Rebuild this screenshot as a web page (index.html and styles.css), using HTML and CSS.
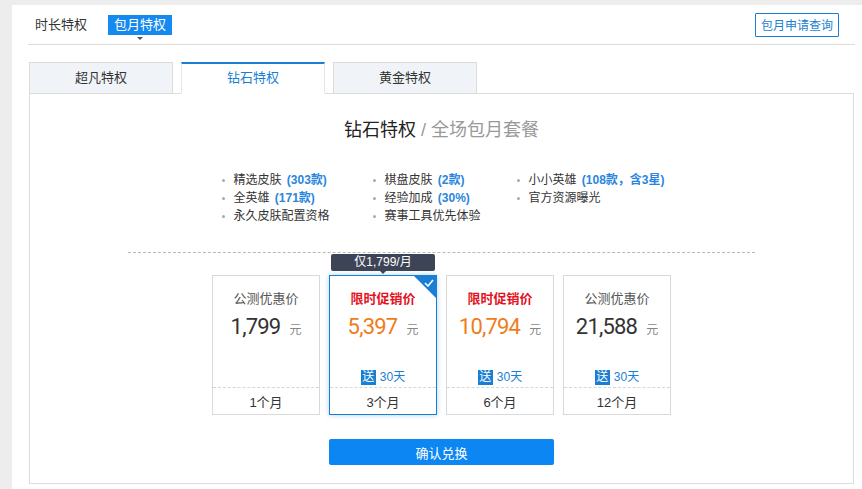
FILE: index.html
```html
<!DOCTYPE html>
<html lang="zh-CN">
  <head>
    <meta charset="UTF-8" />
    <meta name="viewport" content="width=device-width, initial-scale=1.0" />
    <title>包月特权</title>
    <link rel="stylesheet" href="styles.css">
  </head>
  <body>
    <div class="panel">
      <div class="top-bar">
        <div class="top-tabs">
          <span class="top-tab">时长特权</span>
          <span class="top-tab active">包月特权</span>
        </div>
        <button class="query-btn">包月申请查询</button>
      </div>

      <div class="level-tabs">
        <div class="level-tab">超凡特权</div>
        <div class="level-tab active">钻石特权</div>
        <div class="level-tab">黄金特权</div>
      </div>

      <div class="level-box">
        <h2 class="level-title">钻石特权<span class="sub"> / 全场包月套餐</span></h2>

        <ul class="perks">
          <li>精选皮肤 <b>(303款)</b></li>
          <li>棋盘皮肤 <b>(2款)</b></li>
          <li>小小英雄 <b>(108款，含3星)</b></li>
          <li>全英雄 <b>(171款)</b></li>
          <li>经验加成 <b>(30%)</b></li>
          <li>官方资源曝光</li>
          <li>永久皮肤配置资格</li>
          <li>赛事工具优先体验</li>
        </ul>

        <div class="divider"></div>

        <div class="plans">
          <div class="plan">
            <div class="plan-main">
              <div class="plan-name">公测优惠价</div>
              <div class="plan-price"><span class="num">1,799</span><span class="unit">元</span></div>
            </div>
            <div class="plan-term">1个月</div>
          </div>

          <div class="plan selected">
            <div class="tip">仅1,799/月</div>
            <div class="corner">
              <svg width="10" height="8" viewBox="0 0 10 8"><polyline points="1,4 4,7 9,1" fill="none" stroke="#fff" stroke-width="1.6"/></svg>
            </div>
            <div class="plan-main">
              <div class="plan-name sale">限时促销价</div>
              <div class="plan-price"><span class="num orange">5,397</span><span class="unit">元</span></div>
              <div class="plan-gift"><span class="gift-tag">送</span>30天</div>
            </div>
            <div class="plan-term">3个月</div>
          </div>

          <div class="plan">
            <div class="plan-main">
              <div class="plan-name sale">限时促销价</div>
              <div class="plan-price"><span class="num orange">10,794</span><span class="unit">元</span></div>
              <div class="plan-gift"><span class="gift-tag">送</span>30天</div>
            </div>
            <div class="plan-term">6个月</div>
          </div>

          <div class="plan">
            <div class="plan-main">
              <div class="plan-name">公测优惠价</div>
              <div class="plan-price"><span class="num">21,588</span><span class="unit">元</span></div>
              <div class="plan-gift"><span class="gift-tag">送</span>30天</div>
            </div>
            <div class="plan-term">12个月</div>
          </div>
        </div>

        <button class="confirm-btn">确认兑换</button>
      </div>
    </div>
  </body>
</html>
```

FILE: styles.css
```css
body {
  margin: 0;
  padding: 5px 0 0 12px;
  background-color: #ededed;
  font-family: "Liberation Sans", "Noto Sans CJK SC", sans-serif;
  color: #333;
}
.panel {
  background-color: #fff;
  padding: 0 8px 5px 17px;
  min-height: 484px;
  box-sizing: border-box;
}
.top-bar {
  display: flex;
  align-items: center;
  justify-content: space-between;
  height: 39px;
  border-bottom: 1px solid #dcdcdc;
  margin: 0 -1px;
}
.top-tabs {
  display: flex;
  gap: 15px;
  padding-left: 1px;
}
.top-tab {
  position: relative;
  font-size: 13px;
  line-height: 20px;
  padding: 0 6px;
  color: #333;
}
.top-tab.active {
  background-color: #1589ee;
  color: #fff;
}
.top-tab.active::after {
  content: "";
  position: absolute;
  left: 50%;
  bottom: -5px;
  margin-left: -3px;
  border-top: 3px solid #4d5668;
  border-left: 3px solid transparent;
  border-right: 3px solid transparent;
}
.query-btn {
  margin-right: 16px;
  height: 24px;
  padding: 0 5px;
  border: 1px solid #1a7fd4;
  background: #fff;
  color: #1a7fd4;
  font-family: inherit;
  font-size: 12px;
  border-radius: 1px;
}
.level-tabs {
  display: flex;
  gap: 8px;
  margin-top: 17px;
  margin-bottom: -1px;
  position: relative;
  z-index: 1;
}
.level-tab {
  width: 144px;
  height: 32px;
  box-sizing: border-box;
  border: 1px solid #dcdcdc;
  background-color: #f0f3f7;
  text-align: center;
  line-height: 30px;
  font-size: 13px;
  color: #333;
}
.level-tab.active {
  background-color: #fff;
  border-color: #e6e6e6;
  border-top: 2px solid #1a7fd4;
  border-bottom-color: #fff;
  color: #1a7fd4;
  line-height: 28px;
}
.level-box {
  border: 1px solid #dcdcdc;
  height: 391px;
  box-sizing: border-box;
  display: flex;
  flex-direction: column;
  align-items: center;
  padding-top: 24px;
}
.level-title {
  margin: 0;
  font-size: 18px;
  font-weight: normal;
  line-height: 24px;
  color: #222;
}
.level-title .sub {
  color: #999;
}
.perks {
  list-style: none;
  margin: 29px 0 0;
  padding: 0;
  width: 440px;
  display: grid;
  grid-template-columns: 151px 144px 145px;
  font-size: 12px;
  line-height: 18px;
  color: #333;
}
.perks li {
  position: relative;
  padding-left: 12px;
  white-space: nowrap;
}
.perks li::before {
  content: "";
  position: absolute;
  left: 0;
  top: 8px;
  width: 3px;
  height: 3px;
  border-radius: 50%;
  background-color: #aaa;
}
.perks b {
  margin-left: 2px;
  color: #2a86dd;
}
.divider {
  width: 627px;
  margin-top: 27px;
  border-top: 1px dashed #b8b8b8;
}
.plans {
  display: flex;
  gap: 9px;
  margin-top: 22px;
}
.plan {
  position: relative;
  width: 108px;
  height: 140px;
  box-sizing: border-box;
  border: 1px solid #d9d9d9;
  display: flex;
  flex-direction: column;
  background: #fff;
}
.plan.selected {
  border-color: #1a7fd4;
  box-shadow: 0 0 5px rgba(26, 127, 212, 0.35);
}
.plan-main {
  border-bottom: 1px dashed #d6d6d6;
  display: flex;
  flex-direction: column;
  align-items: center;
  padding: 14px 0 2px;
  height: 95px;
}
.plan-name {
  font-size: 13px;
  line-height: 18px;
  color: #555;
}
.plan-name.sale {
  color: #e3141f;
  font-weight: bold;
}
.plan-price {
  margin-top: 5px;
  line-height: 28px;
  white-space: nowrap;
}
.plan-price .num {
  font-family: Roboto, "Liberation Sans", sans-serif;
  font-size: 22px;
  letter-spacing: -0.8px;
  color: #333;
}
.plan-price .num.orange {
  color: #f07c1b;
}
.plan-price .unit {
  margin-left: 9px;
  font-size: 12px;
  color: #888;
}
.plan-gift {
  margin-top: auto;
  font-size: 12px;
  line-height: 16px;
  color: #1a7fd4;
  display: flex;
  align-items: center;
  gap: 4px;
}
.gift-tag {
  display: inline-block;
  width: 15px;
  height: 15px;
  line-height: 15px;
  text-align: center;
  background-color: #1a7fd4;
  color: #fff;
}
.plan-term {
  flex: 1;
  display: flex;
  align-items: center;
  justify-content: center;
  font-size: 13px;
  color: #333;
}
.tip {
  position: absolute;
  left: 1px;
  top: -22px;
  width: 104px;
  height: 17px;
  line-height: 17px;
  text-align: center;
  font-size: 12px;
  color: #fff;
  background-color: #3e4457;
  border-radius: 2px;
}
.tip::after {
  content: "";
  position: absolute;
  left: 50%;
  bottom: -3px;
  margin-left: -3px;
  border-top: 3px solid #3e4457;
  border-left: 3px solid transparent;
  border-right: 3px solid transparent;
}
.corner {
  position: absolute;
  top: 0;
  right: 0;
  width: 0;
  height: 0;
  border-top: 22px solid #1a7fd4;
  border-left: 22px solid transparent;
}
.corner svg {
  position: absolute;
  top: -19px;
  right: 2px;
}
.confirm-btn {
  margin-top: 24px;
  width: 225px;
  height: 26px;
  border: none;
  border-radius: 2px;
  background-color: #0b86f2;
  color: #fff;
  font-family: inherit;
  font-size: 13px;
}
```
